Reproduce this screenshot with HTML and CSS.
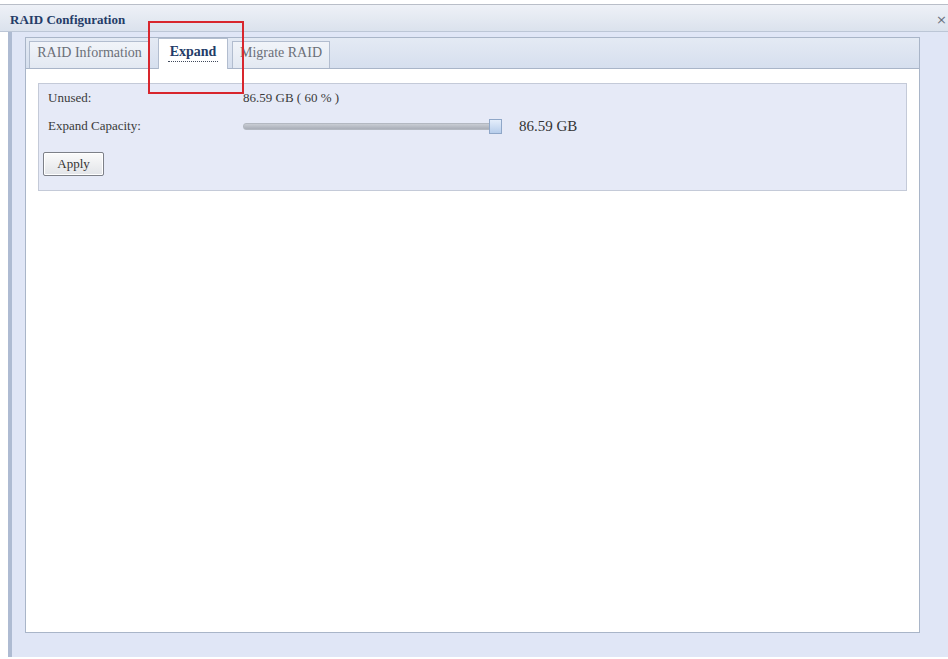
FILE: index.html
```html
<!DOCTYPE html>
<html lang="en">
<head>
    <meta charset="UTF-8">
    <title>RAID Configuration</title>
    <link rel="stylesheet" href="styles.css">
</head>
<body>

    <div class="topline"></div>

    <div class="titlebar">
        <span class="title">RAID Configuration</span>
        <span class="close">&times;</span>
    </div>

    <div class="window">
        <div class="panel">
            <div class="tabs">
                <div class="tab tab-info">RAID Information</div>
                <div class="tab tab-expand active"><span class="focus">Expand</span></div>
                <div class="tab tab-migrate">Migrate RAID</div>
            </div>

            <div class="content">
                <div class="fieldset">
                    <div class="row">
                        <span class="label">Unused:</span>
                        <span class="value">86.59 GB ( 60 % )</span>
                    </div>
                    <div class="row">
                        <span class="label">Expand Capacity:</span>
                        <div class="slider">
                            <div class="track"></div>
                            <div class="thumb"></div>
                        </div>
                        <span class="size">86.59 GB</span>
                    </div>
                    <div class="actions">
                        <button class="apply">Apply</button>
                    </div>
                </div>
            </div>
        </div>
    </div>

    <!-- annotation box -->
    <div class="highlight"></div>

</body>
</html>
```

FILE: styles.css
```css
body {
    font-family: 'Liberation Serif', 'Times New Roman', serif;
    background-color: #ffffff;
    margin: 0;
    padding: 0;
    width: 948px;
    height: 659px;
    overflow: hidden;
    position: relative;
}

.topline {
    height: 4px;
    border-bottom: 1px solid #b9bec8;
}

.titlebar {
    height: 23px;
    display: flex;
    align-items: center;
    justify-content: space-between;
    padding: 3px 0 0 10px;
    background: linear-gradient(#eef1f7, #dbe2ed);
    border-bottom: 1px solid #bcc6d6;
}

.title {
    font-size: 13px;
    font-weight: bold;
    color: #243c68;
}

.close {
    font-family: 'DejaVu Sans', sans-serif;
    font-size: 13px;
    color: #6a7280;
    margin-right: 1px;
}

.window {
    display: flex;
    height: 625px;
    margin-left: 8px;
    border-left: 4px solid #aebbd2;
    background-color: #e0e6f6;
    padding: 5px 28px 24px 13px;
    box-sizing: border-box;
}

.panel {
    flex: 1;
    display: flex;
    flex-direction: column;
    background-color: #ffffff;
    border: 1px solid #a9b5c8;
}

.tabs {
    height: 30px;
    display: flex;
    align-items: flex-end;
    padding-left: 3px;
    background: linear-gradient(#e4eaf4, #d6dfee);
    border-bottom: 1px solid #a9b5c8;
}

.tab {
    height: 27px;
    display: flex;
    align-items: center;
    justify-content: center;
    box-sizing: border-box;
    padding-bottom: 4px;
    border: 1px solid #b2bdcf;
    border-bottom: none;
    background: linear-gradient(#f1f4f9, #e3e9f2);
    font-size: 14px;
    color: #6b6f78;
}

.tab-info {
    width: 121px;
}

.tab-expand {
    width: 70px;
    margin-left: 8px;
}

.tab-migrate {
    width: 98px;
    margin-left: 4px;
}

.tab.active {
    height: 31px;
    padding-bottom: 2px;
    margin-bottom: -1px;
    background: #ffffff;
    color: #243c68;
    font-weight: bold;
}

.focus {
    border-bottom: 1px dotted #404a5c;
    padding: 0 2px 1px;
}

.content {
    flex: 1;
    padding: 14px 12px;
}

.fieldset {
    height: 108px;
    box-sizing: border-box;
    background-color: #e6eaf7;
    border: 1px solid #c4cad8;
    padding: 0 9px;
}

.row {
    display: flex;
    align-items: center;
    height: 28px;
    font-size: 13px;
    color: #3a3a3a;
}

.label {
    width: 195px;
}

.slider {
    position: relative;
    width: 258px;
    height: 14px;
    display: flex;
    align-items: center;
}

.track {
    width: 250px;
    height: 5px;
    border-radius: 3px;
    background: linear-gradient(#c9cdd4, #a9aeb8);
    border: 1px solid #b3b8c1;
}

.thumb {
    position: absolute;
    left: 246px;
    top: 0;
    width: 11px;
    height: 13px;
    border: 1px solid #8fa7c8;
    background: linear-gradient(#e4eefb, #b7cdeb);
}

.size {
    margin-left: 18px;
    font-size: 15px;
    color: #333333;
}

.actions {
    padding: 12px 0 0 0;
    margin-left: -5px;
}

.apply {
    width: 61px;
    height: 24px;
    font-family: 'Liberation Serif', serif;
    font-size: 13px;
    color: #333333;
    background: linear-gradient(#fbfbfb, #e2e4e8);
    border: 1px solid #7d8088;
    border-radius: 2px;
    box-shadow: inset 0 0 0 1px #ffffff;
    cursor: pointer;
}

.highlight {
    position: absolute;
    left: 148px;
    top: 21px;
    width: 92px;
    height: 69px;
    border: 2px solid #d8262d;
}
```
